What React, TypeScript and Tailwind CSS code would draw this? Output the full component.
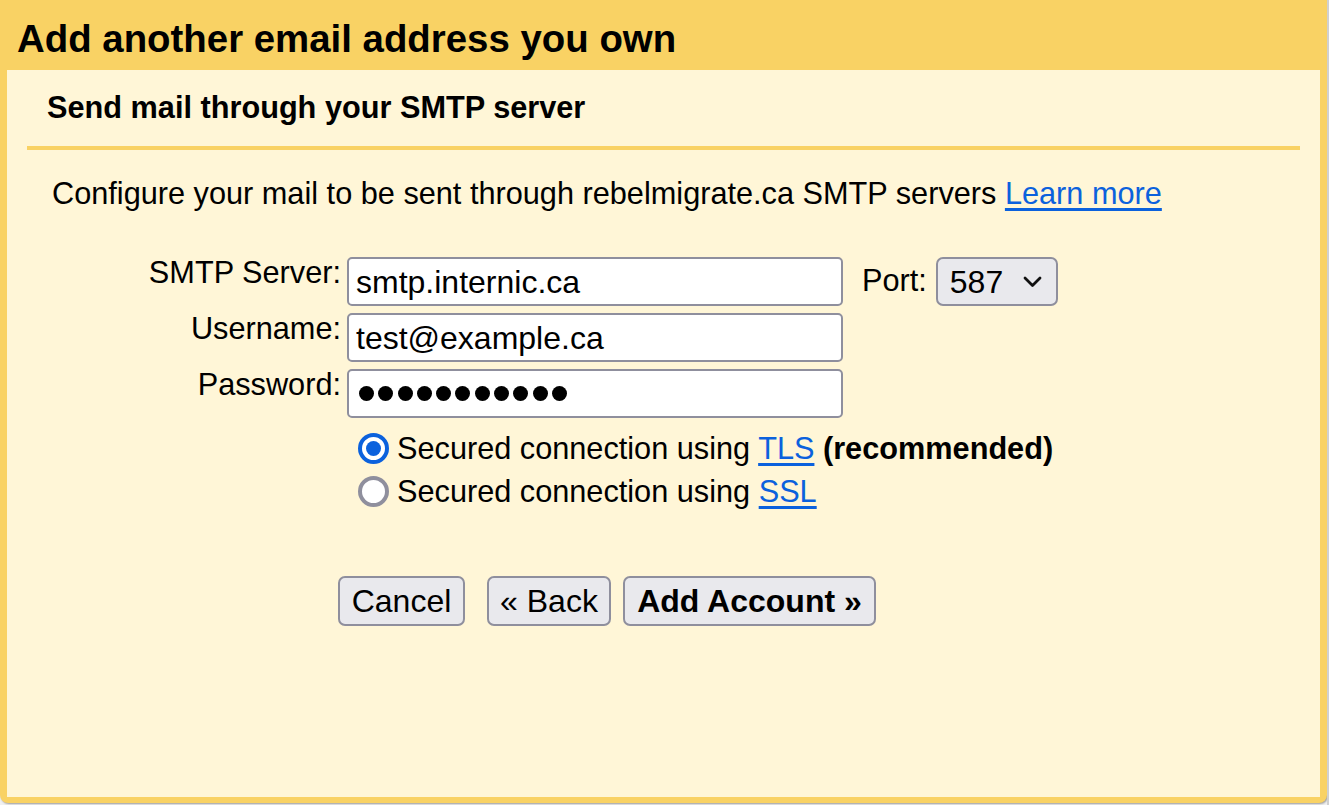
import React from "react";

function Radio({ checked }: { checked?: boolean }) {
  return checked ? (
    <span className="box-border flex h-[31px] w-[31px] shrink-0 items-center justify-center rounded-full border-[4px] border-[#0b61dd] bg-white">
      <span className="h-[15px] w-[15px] rounded-full bg-[#0b61dd]" />
    </span>
  ) : (
    <span className="box-border h-[31px] w-[31px] shrink-0 rounded-full border-[4px] border-[#8f8f9d] bg-white" />
  );
}

const btn =
  "h-[50px] rounded-[7px] border-2 border-[#8f8f9d] bg-[#e9e9ed] text-[32px] leading-none text-black";

const field =
  "flex h-[49px] w-[496px] items-center rounded-[5px] border-2 border-[#8f8f9d] bg-white pl-[7px] text-[32px]";

export default function App() {
  return (
    <div
      className="flex h-[805px] w-full overflow-hidden bg-[#f1f1f1]"
      style={{ fontFamily: '"Liberation Sans", Arial, sans-serif' }}
    >
      <div className="flex h-[803px] w-[1327px] shrink-0 flex-col rounded-bl-[8px] rounded-br-[8px] bg-[#f9d264] shadow-[1px_1px_2px_rgba(0,0,0,0.35)]">
        {/* Title bar */}
        <div className="flex h-[70px] shrink-0 items-center pl-[17px] pt-[9px]">
          <h1 className="text-[38.4px] font-bold leading-none text-black">Add another email address you own</h1>
        </div>

        {/* Body */}
        <div className="mx-[7px] mb-[6px] flex flex-1 flex-col bg-[#fff6d7] text-black">
          <div className="flex h-[76px] items-center pl-[40px] pt-[1px]">
            <h2 className="text-[30.7px] font-bold leading-none">Send mail through your SMTP server</h2>
          </div>
          <div className="mx-[20px] h-[4px] bg-[#f9d264]" />

          <p className="mt-[27px] pl-[45px] text-[30.7px] leading-[34px]">
            Configure your mail to be sent through rebelmigrate.ca SMTP servers{" "}
            <a href="#" className="text-[#0b61dd] underline underline-offset-[4px]">Learn more</a>
          </p>

          {/* Form */}
          <div className="mt-[46px] grid grid-cols-[334px_496px_auto] items-start justify-start gap-x-[6px] gap-y-[7px]">
            <label className="text-right text-[30.7px] leading-[32px]">SMTP Server:</label>
            <div className={field}>smtp.internic.ca</div>
            <div className="ml-[13px] flex items-center gap-[9px]">
              <span className="text-[30.7px]">Port:</span>
              <div className="flex h-[49px] w-[122px] items-center justify-between rounded-[7px] border-2 border-[#8f8f9d] bg-[#e9e9ed] pl-[12px] pr-[13px] text-[32px]">
                <span>587</span>
                <svg width="21" height="13" viewBox="0 0 21 13" fill="none">
                  <path d="M3 3l7.5 7.5L18 3" stroke="#111" strokeWidth="2.8" strokeLinecap="round" strokeLinejoin="round" />
                </svg>
              </div>
            </div>

            <label className="text-right text-[30.7px] leading-[32px]">Username:</label>
            <div className={field}>test@example.ca</div>
            <div />

            <label className="text-right text-[30.7px] leading-[32px]">Password:</label>
            <div className={field + " gap-[4.3px] pl-[10px]"}>
              {Array.from({ length: 11 }).map((_, i) => (
                <span key={i} className="h-[15px] w-[15px] rounded-full bg-black" />
              ))}
            </div>
            <div />
          </div>

          {/* Radios */}
          <div className="mt-[15px] flex flex-col gap-[12px] pl-[351px] text-[30.7px] leading-[31px]">
            <div className="flex items-center gap-[8px]">
              <Radio checked />
              <span>
                Secured connection using{" "}
                <a href="#" className="text-[#0b61dd] underline underline-offset-[4px]">TLS</a>{" "}
                <b>(recommended)</b>
              </span>
            </div>
            <div className="flex items-center gap-[8px]">
              <Radio />
              <span>
                Secured connection using{" "}
                <a href="#" className="text-[#0b61dd] underline underline-offset-[4px]">SSL</a>
              </span>
            </div>
          </div>

          {/* Buttons */}
          <div className="mt-[69px] flex pl-[331px]">
            <button className={btn + " w-[127px]"}>Cancel</button>
            <button className={btn + " ml-[22px] w-[124px]"}>« Back</button>
            <button className={btn + " ml-[12px] w-[253px] font-bold"}>Add Account »</button>
          </div>
        </div>
      </div>
      <div className="w-[2px] shrink-0 bg-[#d0d0d0]" />
    </div>
  );
}
